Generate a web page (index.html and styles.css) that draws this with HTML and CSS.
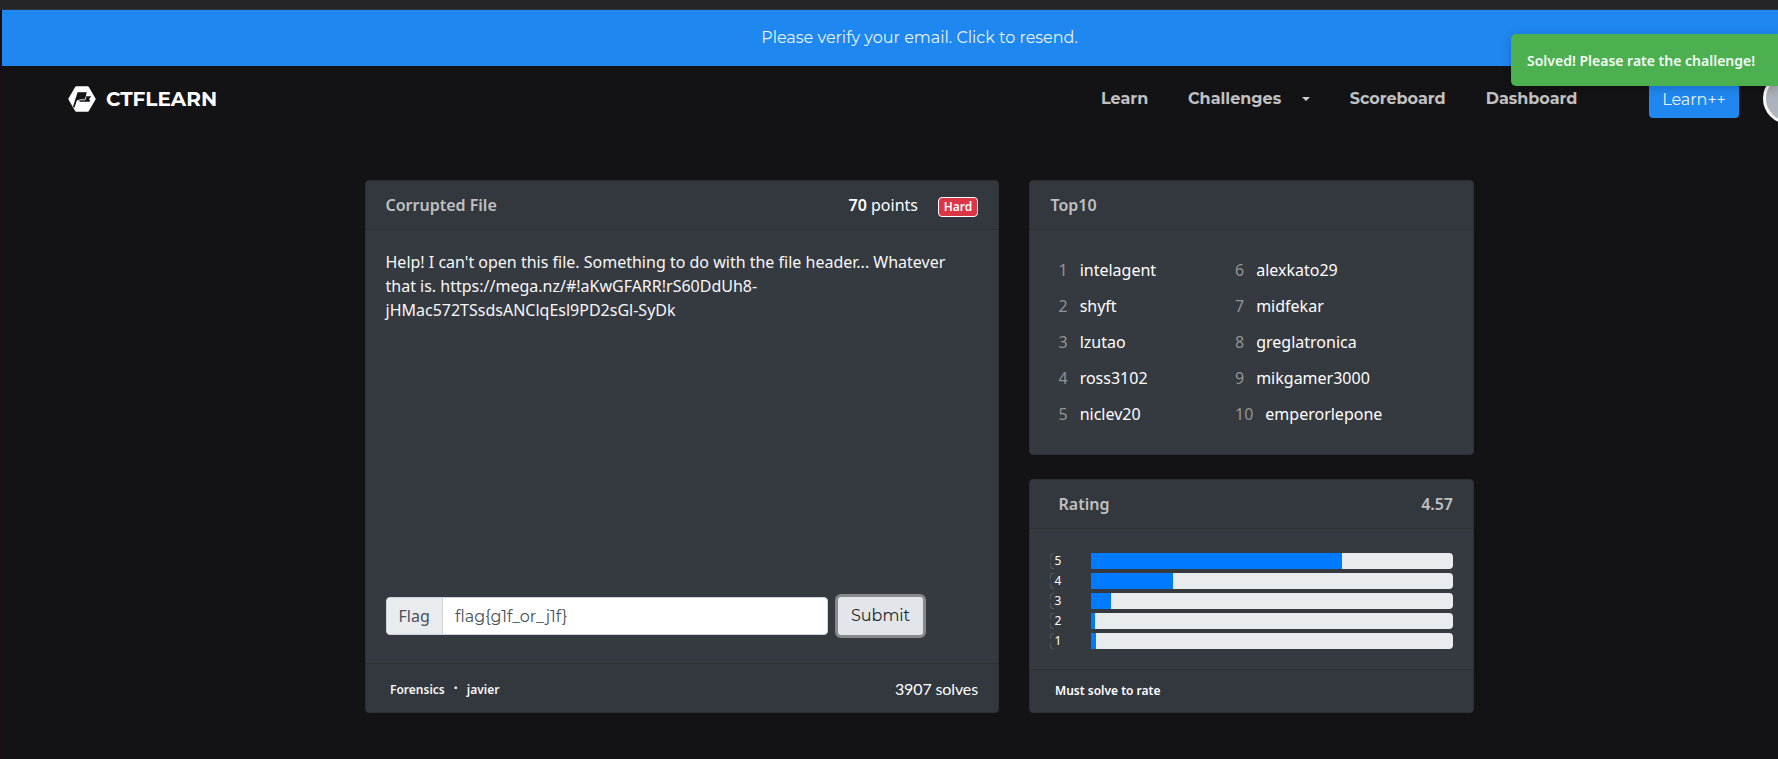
FILE: index.html
```html
<!DOCTYPE html>
<html lang="en">
<head>
<meta charset="utf-8">
<title>CTFlearn - Corrupted File</title>
<link rel="stylesheet" href="styles.css">
</head>
<body>
<div class="window-edge"></div>
<div class="page">
  <a class="verify"><span class="verify-text">Please verify your email. Click to resend.</span></a>
  <nav class="nav">
    <a class="brand">
      <svg class="logo" width="28" height="26" viewBox="0 0 28 26">
        <path d="M8.200 1.500h11.600l6.700 11.500-6.700 11.500H8.200L1.500 13z" fill="#fff" stroke="#fff" stroke-width="2.400" stroke-linejoin="round"/>
        <path d="M9.600 6.300h9.200l-1 3.900h5.500l-2.100 2.500 1 3H11.300l.5-1.400H9L6.300 22l-1.300-1.600z" fill="#131315"/>
        <path d="M11.300 13.800h5.700l1.100-3.200" fill="none" stroke="#fff" stroke-width=".9"/>
      </svg>
      <span class="brand-name">CTFLEARN</span>
    </a>
    <div class="links">
      <a class="link l-learn">Learn</a>
      <a class="link l-chal">Challenges</a><span class="caret"></span>
      <a class="link l-score">Scoreboard</a>
      <a class="link l-dash">Dashboard</a>
      <a class="plus"><span class="plus-text">Learn++</span></a>
      <span class="avatar"></span>
    </div>
  </nav>
  <main class="main">
    <section class="card challenge">
      <header class="card-head">
        <span class="title">Corrupted File</span>
        <span class="points"><b>70</b> points</span>
        <span class="badge">Hard</span>
      </header>
      <div class="card-body challenge-body">
        <p class="desc">Help! I can't open this file. Something to do with the file header... Whatever that is. https://mega.nz/#!aKwGFARR!rS60DdUh8-jHMac572TSsdsANClqEsl9PD2sGl-SyDk</p>
        <div class="form">
          <div class="group"><span class="prepend">Flag</span><span class="input"><span class="value">flag{g1f_or_j1f}</span></span></div>
          <button class="submit"><span class="submit-text">Submit</span></button>
        </div>
      </div>
      <footer class="card-foot challenge-foot">
        <span class="tag">Forensics</span><span class="dot">·</span><span class="tag">javier</span>
        <span class="solves">3907 solves</span>
      </footer>
    </section>
    <div class="side">
      <section class="card top">
        <header class="card-head top-head"><span class="title">Top10</span></header>
        <div class="ranks">
          <div class="rank"><i>1</i>intelagent</div><div class="rank"><i>6</i>alexkato29</div>
          <div class="rank"><i>2</i>shyft</div><div class="rank"><i>7</i>midfekar</div>
          <div class="rank"><i>3</i>lzutao</div><div class="rank"><i>8</i>greglatronica</div>
          <div class="rank"><i>4</i>ross3102</div><div class="rank"><i>9</i>mikgamer3000</div>
          <div class="rank"><i>5</i>niclev20</div><div class="rank"><i>10</i>emperorlepone</div>
        </div>
      </section>
      <section class="card rating">
        <header class="card-head rating-head"><span class="title">Rating</span><span class="title">4.57</span></header>
        <div class="bars">
          <div class="row"><span class="star">5</span><div class="track"><div class="fill" style="width:251px"></div></div></div>
          <div class="row"><span class="star">4</span><div class="track"><div class="fill" style="width:82px"></div></div></div>
          <div class="row"><span class="star">3</span><div class="track"><div class="fill" style="width:20px"></div></div></div>
          <div class="row"><span class="star">2</span><div class="track"><div class="fill" style="width:4px"></div></div></div>
          <div class="row"><span class="star">1</span><div class="track"><div class="fill" style="width:5px"></div></div></div>
        </div>
        <footer class="card-foot rating-foot"><span>Must solve to rate</span></footer>
      </section>
    </div>
  </main>
</div>
<div class="toast">Solved! Please rate the challenge!</div>
</body>
</html>
```
FILE: styles.css
```css
* { box-sizing: border-box; }
body {
  margin: 0;
  width: 1778px;
  height: 759px;
  overflow: hidden;
  background: #131315;
  color: #fff;
  font: 16px/24px "Noto Sans", sans-serif;
}
.window-edge { height: 10px; background: #252529; border-bottom: 1px solid #34343a; }
.page { height: 749px; border-left: 2px solid #1b0d17; }
.verify {
  display: flex;
  justify-content: center;
  height: 56px;
  padding: 16px 0 0 59px;
  background: #1f87f0;
  color: rgba(255,255,255,.92);
}
.verify-text { white-space: nowrap; font-family: Montserrat, "Open Sans", sans-serif; font-weight: 400; }
.nav { display: flex; justify-content: space-between; height: 65px; padding-left: 66px; }
.brand { display: flex; align-items: center; gap: 10px; }
.logo { display: block; }
.brand-name { font: 700 20px/24px Montserrat, "Open Sans", sans-serif; color: #fff; }
.links { display: flex; align-items: center; width: 677px; flex: none; overflow: hidden; }
.link { flex: none; font-family: Montserrat, "Open Sans", sans-serif; font-weight: 700; color: #c1c1c1; white-space: nowrap; }
.l-learn { width: 87px; }
.l-chal { width: 114px; }
.caret { flex: none; width: 8px; margin-right: 39.700px; border: 4px solid transparent; border-top-color: #d0d0d0; border-bottom: 0; }
.l-score { width: 136px; }
.l-dash { width: 163.300px; }
.plus { flex: none; width: 90px; height: 38px; margin-right: 24px; padding: 7px 0; border-radius: 4px; background: #1f87f0; text-align: center; }
.plus-text { font-family: Montserrat, "Open Sans", sans-serif; font-weight: 400; color: rgba(255,255,255,.92); }
.avatar { flex: none; width: 51px; height: 51px; border: 3px solid #f8f8f8; border-radius: 50%; background: linear-gradient(#a4a9b3, #b0b8c0); }
.main { display: flex; gap: 30px; padding: 49px 0 0 363px; }
.card { display: flex; flex-direction: column; border: 1px solid #2d3135; border-radius: 4px; background: #353940; }
.challenge { width: 634px; height: 533px; }
.card-head { display: flex; height: 49px; flex: none; padding: 12px 20px 12px 19.5px; border-bottom: 1px solid #2d3033; border-radius: 3px 3px 0 0; background: #33373e; }
.top-head { padding-left: 20.5px; }
.title { font-weight: 600; color: #c0c0c1; }
.points { margin-left: auto; }
.points b { font-weight: 600; }
.badge { height: 20px; width: 40px; margin: 4px 0 0 20px; border: 1px solid #fff; border-radius: 4px; background: #dc3545; font-size: 12px; font-weight: 600; line-height: 17px; text-align: center; }
.challenge-body { display: flex; flex: 1; flex-direction: column; justify-content: space-between; padding: 20px 20px 28px; }
.desc { margin: 0 0 0 -.5px; color: #f8f8f8; }
.form { display: flex; gap: 10px; }
.group { display: flex; width: 442px; height: 38px; border: 1px solid #ced4da; border-radius: 4px; background: #fff; overflow: hidden; }
.prepend { width: 56px; padding: 6px 11.5px; border-right: 1px solid #ced4da; background: #e9ecef; color: #495057; }
.input { padding: 7px 12px 5px; color: #495057; font-family: Montserrat, Lato, sans-serif; font-weight: 400; }
.submit { width: 85px; height: 38px; padding: 0; border: 0; border-radius: 3px; background: #e2e6ea; box-shadow: 0 0 0 3px #86888c; color: #212529; font: 400 16px/36px Montserrat, Lato, sans-serif; }
.card-foot { border-top: 1px solid #2d3033; border-radius: 0 0 3px 3px; background: #33373e; font-size: 12px; font-weight: 600; }
.challenge-foot { display: flex; height: 49px; padding: 14px 20px 0 24px; }
.tag { color: #f8f9fa; }
.dot { width: 22px; text-align: center; font-size: 16px; line-height: 20px; }
.solves { margin-left: auto; font: 400 16px/21px Lato, sans-serif; letter-spacing: -.12px; }
.side { display: flex; flex-direction: column; gap: 24px; }
.top { width: 445px; height: 275px; }
.ranks { display: grid; grid-template-columns: 176.5px 1fr; grid-auto-rows: 36px; padding: 22px 0 0 28.5px; line-height: 36px; }
.rank i { margin-right: 12px; font-style: normal; color: #949494; }
.rating { width: 445px; height: 234px; }
.rating-head { justify-content: space-between; padding-left: 28.5px; }
.bars { display: flex; flex-direction: column; gap: 4px; flex: 1; padding: 24px 20px 0 20px; }
.row { display: flex; height: 16px; }
.star { position: relative; width: 41px; padding-left: 4.5px; font-size: 12px; line-height: 16px; }
.star::before, .star::after { content: ""; position: absolute; left: 0; width: 3px; height: 5px; border-left: 1px solid #54575d; }
.star::before { top: 0; border-top: 1px solid #54575d; border-top-left-radius: 3px; }
.star::after { bottom: 0; border-bottom: 1px solid #54575d; border-bottom-left-radius: 3px; }
.track { width: 362px; border-radius: 0 4px 4px 0; background: #e9ecef; overflow: hidden; }
.fill { height: 16px; background: #007bff; }
.rating-foot { height: 43px; padding: 9px 25px; }
.toast { position: absolute; top: 34px; left: 1511px; width: 267px; height: 52px; padding: 15px 16px 13px; border-radius: 5px 0 0 5px; background: #4caf50; color: #f5fbf5; box-shadow: 0 2px 10px rgba(0,0,0,.2); font-size: 14px; font-weight: 600; white-space: nowrap; }
```
